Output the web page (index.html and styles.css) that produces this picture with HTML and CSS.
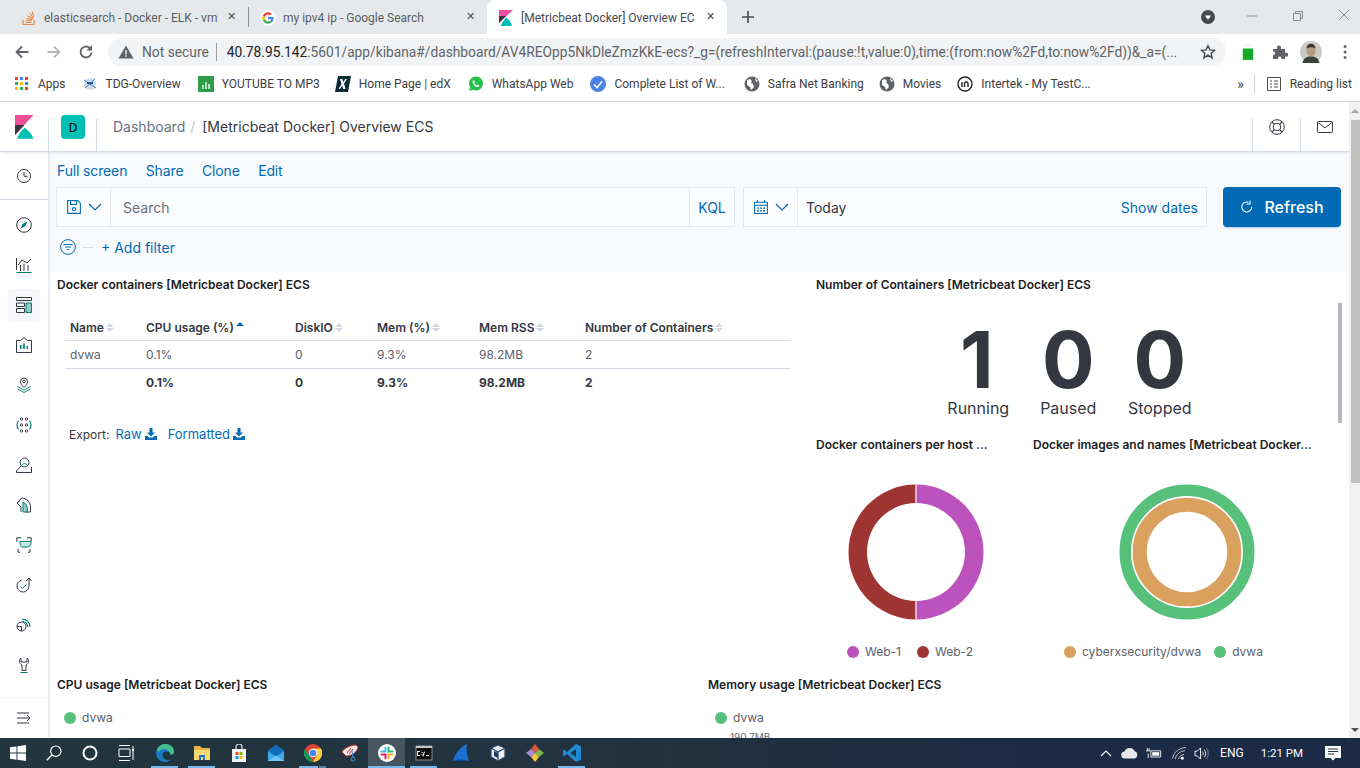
FILE: index.html
```html
<!DOCTYPE html>
<html lang="en">
<head>
<meta charset="utf-8">
<title>[Metricbeat Docker] Overview ECS</title>
<link rel="stylesheet" href="styles.css">
</head>
<body>
<div class="tabstrip">
  <div class="tab tab-first">
    <svg class="fav" viewBox="0 0 16 16"><path d="M2 10v4.500h11V10" fill="none" stroke="#d98b52" stroke-width="1.200"/><path d="M4.500 12.500h6M4.700 10.500l6 .5M5.500 8.500l5.700 1.400M7 6l5 3M9 3.500l3.400 4.500M11.200 1.500l1.600 5" stroke="#e08a3c" stroke-width="1.100" fill="none"/></svg>
    <span class="tab-title">elasticsearch - Docker - ELK - vm</span>
    <span class="tab-x">✕</span>
  </div>
  <div class="tab-sep"></div>
  <div class="tab tab-second">
    <svg class="fav" viewBox="0 0 16 16"><circle cx="8" cy="8" r="8" fill="#fff"/><path d="M13.600 8.100c0-.4 0-.8-.1-1.200H8v2.300h3.200c-.2.800-.6 1.400-1.200 1.800l1.800 1.400c1.100-1 1.800-2.500 1.800-4.300z" fill="#4285f4"/><path d="M8 13.700c1.500 0 2.800-.5 3.800-1.400L10 10.900c-.5.300-1.200.5-2 .5-1.500 0-2.800-1-3.200-2.400L2.900 10.500c.9 1.900 2.900 3.200 5.100 3.200z" fill="#34a853"/><path d="M4.800 9c-.2-.7-.2-1.400 0-2L2.900 5.500c-.8 1.600-.8 3.400 0 5z" fill="#fbbc05"/><path d="M8 4.600c.8 0 1.600.3 2.200.9l1.600-1.600C10.800 2.900 9.500 2.300 8 2.300c-2.200 0-4.200 1.300-5.100 3.200L4.800 7C5.200 5.600 6.500 4.600 8 4.600z" fill="#ea4335"/></svg>
    <span class="tab-title">my ipv4 ip - Google Search</span>
    <span class="tab-x">✕</span>
  </div>
  <div class="tab tab-active">
    <svg class="fav" viewBox="0 0 16 16"><path d="M1 0h14L1 13z" fill="#f04e98"/><path d="M1 6h7L1 13z" fill="#343741"/><path d="M2.500 16C4 12.500 6 9.500 8.300 7.500c2.900 2 4.900 5 5.700 8.500z" fill="#00bfb3"/></svg>
    <span class="tab-title">[Metricbeat Docker] Overview EC</span>
    <span class="tab-x">✕</span>
  </div>
  <svg class="newtab" viewBox="0 0 14 14"><path d="M7 1v12M1 7h12" stroke="#45494e" stroke-width="1.600"/></svg>
  <div class="winctl">
    <svg class="profile-drop" viewBox="0 0 14 14"><circle cx="7" cy="7" r="7" fill="#45494e"/><path d="M3.800 5.500h6.400L7 9.800z" fill="#fff"/></svg>
    <svg class="wbtn" viewBox="0 0 12 12"><path d="M1 6h10" stroke="#8a8d91"/></svg>
    <svg class="wbtn" viewBox="0 0 12 12"><path d="M1.500 3.500h7v7h-7zM3.500 3.500v-2h7v7h-2" fill="none" stroke="#8a8d91"/></svg>
    <svg class="wbtn" viewBox="0 0 12 12"><path d="M1 1l10 10M11 1L1 11" stroke="#8a8d91"/></svg>
  </div>
</div>

<div class="toolbar">
  <svg class="navbtn" viewBox="0 0 16 16"><path d="M14.500 8h-12M8 2.500L2.500 8 8 13.500" fill="none" stroke="#5f6368" stroke-width="1.800"/></svg>
  <svg class="navbtn" viewBox="0 0 16 16"><path d="M1.500 8h12M8 2.500L13.500 8 8 13.500" fill="none" stroke="#b6b8bb" stroke-width="1.800"/></svg>
  <svg class="navbtn" viewBox="0 0 16 16"><path d="M13.500 8.500A5.500 5.500 0 1 1 11.800 4" fill="none" stroke="#5f6368" stroke-width="1.800"/><path d="M14 1v5.500H8.500z" fill="#5f6368"/></svg>
  <div class="omnibox">
    <svg class="warn" viewBox="0 0 16 16"><path d="M8 1.500L15.500 14.500H.5z" fill="#5f6368"/><path d="M7.300 6h1.400v4.500H7.300zM7.300 11.300h1.400v1.500H7.300z" fill="#f1f3f4"/></svg>
    <span class="notsecure">Not secure</span>
    <span class="omni-sep"></span>
    <span class="url"><b>40.78.95.142</b>:5601/app/kibana#/dashboard/AV4REOpp5NkDleZmzKkE-ecs?_g=(refreshInterval:(pause:!t,value:0),time:(from:now%2Fd,to:now%2Fd))&amp;_a=(...</span>
    <svg class="star" viewBox="0 0 16 16"><path d="M8 1.700l1.900 4.200 4.600.5-3.400 3.100 1 4.500L8 11.200l-4.100 2.800 1-4.500L1.500 6.400l4.600-.5z" fill="none" stroke="#45494e" stroke-width="1.400"/></svg>
  </div>
  <svg class="ext-bag" viewBox="0 0 16 18"><path d="M5 3.500c0-4 6-4 6 0" fill="none" stroke="#c9e8cf"/><path d="M2 5h12v13H2z" fill="#16a826"/></svg>
  <svg class="ext-puzzle" viewBox="0 0 16 16"><path d="M1 5h4V3.500a2 2 0 0 1 4 0V5h4v3.800h1.200a2 2 0 0 1 0 4H13V15H9.500v-1a1.800 1.800 0 0 0-3.500 0v1H1v-4h1a2 2 0 0 0 0-3.500H1z" fill="#5f6368"/></svg>
  <svg class="avatar" viewBox="0 0 22 22"><circle cx="11" cy="11" r="11" fill="#c9cbc4"/><path d="M2.500 22c1-5 4-6.500 8.500-6.500s7.500 1.500 8.500 6.500z" fill="#3a4336"/><ellipse cx="11" cy="9.500" rx="4.500" ry="6" fill="#b79a80"/><path d="M6.500 8c0-7 9-7 9 0-1-2.500-8-2.500-9 0z" fill="#3e3128"/></svg>
  <svg class="menu-dots" viewBox="0 0 4 16"><circle cx="2" cy="2.500" r="1.500" fill="#5f6368"/><circle cx="2" cy="8" r="1.500" fill="#5f6368"/><circle cx="2" cy="13.500" r="1.500" fill="#5f6368"/></svg>
</div>

<div class="bookmarks">
  <span class="bm bm-apps">
    <svg class="bmi" viewBox="0 0 14 14"><g><rect x="0" y="0" width="3" height="3" fill="#ea4335"/><rect x="5" y="0" width="3" height="3" fill="#4285f4"/><rect x="10" y="0" width="3" height="3" fill="#ea4335"/><rect x="0" y="5" width="3" height="3" fill="#34a853"/><rect x="5" y="5" width="3" height="3" fill="#fbbc05"/><rect x="10" y="5" width="3" height="3" fill="#4285f4"/><rect x="0" y="10" width="3" height="3" fill="#fbbc05"/><rect x="5" y="10" width="3" height="3" fill="#34a853"/><rect x="10" y="10" width="3" height="3" fill="#ea4335"/></g></svg>Apps</span>
  <span class="bm bm-tdg">
    <svg class="bmi" viewBox="0 0 16 16"><circle cx="8" cy="8" r="6" fill="#cfdff0"/><path d="M2 4l12 8M3 12l10-9" stroke="#4a78a8"/><path d="M5 6h6v2H5z" fill="#1e5a96"/></svg>TDG-Overview</span>
  <span class="bm bm-yt">
    <svg class="bmi" viewBox="0 0 16 16"><rect width="16" height="16" fill="#2e9d4a"/><path d="M4 9h2v4H4zM7 6h2v7H7zM10 8h2v5h-2z" fill="#b7dfc2"/></svg>YOUTUBE TO MP3</span>
  <span class="bm bm-edx">
    <svg class="bmi" viewBox="0 0 16 16"><path d="M3 0h13l-3 16H0z" fill="#0a2a38"/><path d="M5 3h2.300l1 3 2-3H12L9 7.500l1.500 5.500H8.200L7.300 9.500 5 13H3.500l3-5z" fill="#fff"/></svg>Home Page | edX</span>
  <span class="bm bm-wa">
    <svg class="bmi" viewBox="0 0 16 16"><circle cx="8" cy="7.500" r="7" fill="#25c04a"/><path d="M1 15l1.500-4 3 2.500z" fill="#25c04a"/><path d="M5 4.500c-1 1.500 0 3.500 1.500 5s3 2 4.300 1.300l.5-1.300-2-1-.8.800c-1-.3-2-1.300-2.300-2.300l.8-.8-1-2z" fill="#fff"/></svg>WhatsApp Web</span>
  <span class="bm bm-check">
    <svg class="bmi" viewBox="0 0 16 16"><circle cx="8" cy="8" r="8" fill="#4a83e8"/><path d="M4 8.500l3 3 5-6" fill="none" stroke="#fff" stroke-width="1.600"/></svg>Complete List of W...</span>
  <span class="bm bm-safra">
    <svg class="bmi" viewBox="0 0 16 16"><circle cx="8" cy="8" r="7.500" fill="#5f6368"/><path d="M3 4l3-1 2 2-1 2 2 1 1 3-3 3-1-3-3-2zM11 2l3 3-2 1z" fill="#fff"/></svg>Safra Net Banking</span>
  <span class="bm bm-movies">
    <svg class="bmi" viewBox="0 0 16 16"><circle cx="8" cy="8" r="7.500" fill="#5f6368"/><path d="M3 4l3-1 2 2-1 2 2 1 1 3-3 3-1-3-3-2zM11 2l3 3-2 1z" fill="#fff"/></svg>Movies</span>
  <span class="bm bm-intertek">
    <svg class="bmi" viewBox="0 0 16 16"><circle cx="8" cy="8" r="7" fill="#fff" stroke="#222" stroke-width="1.400"/><path d="M5 6v5M7.500 11V7.500c0-2 3.500-2 3.500 0V11" fill="none" stroke="#222" stroke-width="1.400"/></svg>Intertek - My TestC...</span>
  <span class="bm-more">»</span>
  <span class="bm-sep"></span>
  <span class="bm bm-reading">
    <svg class="bmi" viewBox="0 0 14 14"><path d="M.5.500h13v13H.5zM3 4h2M3 7h2M3 10h2M7 4h4M7 7h4M7 10h4" fill="none" stroke="#45494e"/></svg>Reading list</span>
</div>

<div class="app">
  <div class="app-main">
    <header class="kbn-header">
      <div class="logo-cell">
        <svg class="kbn-logo" viewBox="0 0 19 24"><path d="M0 0h18.500L0 20z" fill="#f04e98"/><path d="M0 10h9.500L0 20z" fill="#343741"/><path d="M2 23.800C3.500 19.500 6 15.500 9.700 12.800c4 2.700 7.200 6.300 8.800 11z" fill="#00bfb3"/></svg>
      </div>
      <span class="hdr-div"></span>
      <div class="badge-cell"><span class="space-badge">D</span></div>
      <span class="hdr-div"></span>
      <nav class="crumbs"><span class="crumb">Dashboard</span><span class="crumb-sep">/</span><span class="crumb-cur">[Metricbeat Docker] Overview ECS</span></nav>
      <span class="hdr-div"></span>
      <div class="hdr-btn">
        <svg class="i16" viewBox="0 0 16 16"><circle cx="8" cy="8" r="7.300" fill="none" stroke="#343741"/><circle cx="8" cy="8" r="3.800" fill="none" stroke="#343741"/><path d="M3 2.800l2.300 2.500M13 2.800l-2.300 2.500M3 13.200l2.300-2.500M13 13.200l-2.300-2.500" stroke="#343741" stroke-width="1.200"/></svg>
      </div>
      <span class="hdr-div"></span>
      <div class="hdr-btn">
        <svg class="i16" viewBox="0 0 16 16"><rect x=".5" y="2.500" width="15" height="11" rx="1.200" fill="none" stroke="#343741"/><path d="M1 3.500l7 5.500 7-5.500" fill="none" stroke="#343741"/></svg>
      </div>
    </header>
    <div class="kbn-body">
      <aside class="sidenav">
        <div class="side-recent">
          <svg class="i16" viewBox="0 0 16 16"><circle cx="8" cy="8" r="6.500" fill="none" stroke="#343741"/><path d="M8 4v4.300h3.500" fill="none" stroke="#343741"/></svg>
        </div>
        <div class="side-list">
          <div class="side-item"><svg class="i16" viewBox="0 0 16 16"><circle cx="8" cy="8" r="7.300" fill="none" stroke="#343741"/><path d="M11.500 4.500L9.300 9.300 4.500 11.500l2.200-4.800z" fill="#017d73"/></svg></div>
          <div class="side-item"><svg class="i16" viewBox="0 0 16 16"><path d="M.5 15.500h15" stroke="#017d73"/><path d="M.5 13V1M2 8l4-5 5 3 4-4" fill="none" stroke="#343741"/><path d="M4.500 14V8M8 14V6.500M12 14V8" stroke="#343741"/></svg></div>
          <div class="side-item side-active"><svg class="i16" viewBox="0 0 16 16"><path d="M.5.500h15v3H.5zM.5 6h8v3.500h-8zM.5 11.500h8v4h-8z" fill="none" stroke="#343741"/><path d="M10 6h5.500v9.500H10z" fill="#8ecdc7" stroke="#017d73"/></svg></div>
          <div class="side-item"><svg class="i16" viewBox="0 0 16 16"><path d="M.5 3.500h4L8 .5l3.500 3h4v12H.5z" fill="none" stroke="#343741"/><path d="M4 8h1.500v4H4zM7.200 6.500h1.600V12H7.200zM10.500 9H12v3h-1.500z" fill="#017d73"/></svg></div>
          <div class="side-item"><svg class="i16" viewBox="0 0 16 16"><path d="M8 10.500C6 8.500 4.500 7 4.500 4.500a3.500 3.500 0 0 1 7 0c0 2.500-1.500 4-3.500 6z" fill="none" stroke="#343741"/><circle cx="8" cy="4.500" r="1.300" fill="none" stroke="#343741"/><path d="M1.500 9.500L8 13l6.500-3.500M1.500 12L8 15.500 14.500 12" fill="none" stroke="#017d73"/></svg></div>
          <div class="side-item"><svg class="i16" viewBox="0 0 16 16"><g fill="none" stroke="#343741"><circle cx="5.500" cy="2" r="1.200"/><circle cx="10.500" cy="2" r="1.200"/><circle cx="5.500" cy="8" r="1.200"/><circle cx="10.500" cy="8" r="1.200"/><circle cx="5.500" cy="14" r="1.200"/><circle cx="10.500" cy="14" r="1.200"/></g><path d="M2.500 3.500C.5 6 .5 10 2.500 12.500M13.500 3.500c2 2.500 2 6.500 0 9" fill="none" stroke="#017d73" stroke-width="1.200"/></svg></div>
          <div class="side-item"><svg class="i16" viewBox="0 0 16 16"><circle cx="8.500" cy="5.500" r="4.500" fill="none" stroke="#343741"/><path d="M5.500 8.500c1.500-2.500 4.500-2.500 6 0" fill="none" stroke="#017d73"/><path d="M5 9L.5 14v1.500h15V10" fill="none" stroke="#343741"/></svg></div>
          <div class="side-item"><svg class="i16" viewBox="0 0 16 16"><path d="M1 6L5.500 1c5 0 9 4 9 9v5h-5" fill="none" stroke="#343741"/><path d="M4 3.500L1 6l4 4v5" fill="none" stroke="#343741"/><path d="M7 5c2.500 1 4.500 4 4.500 8v2H7z" fill="#8ecdc7" stroke="#017d73"/></svg></div>
          <div class="side-item"><svg class="i16" viewBox="0 0 16 16"><path d="M5 .8H.8v3.700M11 .8h4.200v3.700M4 15.200h-2V12M12 15.200h2V12" fill="none" stroke="#343741"/><path d="M4 4.500h11v2c0 2-2 3.500-4 3.500H6C5 10 4 8 4 6.500z" fill="#c6e7e3" stroke="#017d73"/></svg></div>
          <div class="side-item"><svg class="i16" viewBox="0 0 16 16"><path d="M13 1l-2.800 3M13 1l2.500 3M13 1v8a6 6 0 1 1-7.500-5.800" fill="none" stroke="#343741"/><path d="M4.500 9.300l2 2 3.500-3.500" fill="none" stroke="#017d73"/></svg></div>
          <div class="side-item"><svg class="i16" viewBox="0 0 16 16"><path d="M1 9.500a4.500 4.500 0 1 1 4.500 4.500v-4.500zM5.500 14A4.500 4.500 0 0 1 1 9.500" fill="none" stroke="#343741"/><path d="M6 2c4.500 0 8 3.500 8 8M6.500 4.500c3 0 5.200 2.500 5.200 5.500" fill="none" stroke="#017d73" stroke-width="1.100"/></svg></div>
          <div class="side-item"><svg class="i16" viewBox="0 0 16 16"><path d="M5 1C2.500 2.500 3 6.500 6 8v5.500h4V8c3-1.500 3.500-5.500 1-7v4H5z" fill="none" stroke="#343741"/><path d="M4.500 15.500h7" stroke="#017d73"/></svg></div>
          <div class="side-item"><svg class="i16" viewBox="0 0 16 16"><circle cx="5" cy="2" r="1.500" fill="none" stroke="#343741"/><circle cx="11" cy="2" r="1.500" fill="none" stroke="#343741"/></svg></div>
        </div>
        <div class="side-foot">
          <svg class="i16" viewBox="0 0 16 16"><path d="M1 3h12M1 8h13M1 13h12M11 5l3 3-3 3" fill="none" stroke="#343741"/></svg>
        </div>
      </aside>
      <main class="content">
        <section class="querybar">
          <div class="toplinks"><a>Full screen</a><a>Share</a><a>Clone</a><a>Edit</a></div>
          <div class="searchrow">
            <div class="field field-search">
              <span class="field-btn btn-save">
                <svg class="i14" viewBox="0 0 16 16"><path d="M.7.700h11.600l3 3v11.600H.7zM4 .7v4.500h7V.7" fill="none" stroke="#006bb4" stroke-width="1.200"/><circle cx="8" cy="10.500" r="1.800" fill="none" stroke="#006bb4" stroke-width="1.200"/></svg>
                <svg class="chev" viewBox="0 0 14 8"><path d="M1 1l6 6 6-6" fill="none" stroke="#006bb4" stroke-width="1.200"/></svg>
              </span>
              <span class="field-text placeholder">Search</span>
              <span class="field-end kql">KQL</span>
            </div>
            <div class="field field-date">
              <span class="field-btn btn-cal">
                <svg class="i14" viewBox="0 0 16 16"><path d="M.7 2.500h14.600v13H.7z" fill="none" stroke="#006bb4" stroke-width="1.200"/><path d="M.7 6h14.600" stroke="#006bb4" stroke-width="1.200"/><path d="M4 0v3.500M12 0v3.500" stroke="#006bb4" stroke-width="1.200"/><path d="M3.500 8.500h2v1.500h-2zM7 8.500h2v1.500H7zM10.500 8.500h2v1.500h-2zM3.500 11.500h2V13h-2zM7 11.500h2V13H7zM10.500 11.500h2V13h-2z" fill="#006bb4"/></svg>
                <svg class="chev" viewBox="0 0 14 8"><path d="M1 1l6 6 6-6" fill="none" stroke="#006bb4" stroke-width="1.200"/></svg>
              </span>
              <span class="field-text today">Today</span>
              <a class="showdates">Show dates</a>
            </div>
            <button class="refresh">
              <svg class="i14" viewBox="0 0 16 16"><path d="M13.500 8A5.700 5.700 0 1 1 9.500 2.500" fill="none" stroke="#fff" stroke-width="1.200"/><path d="M11.500 .5v4h-4" fill="none" stroke="#fff" stroke-width="1.200"/></svg>
              <span>Refresh</span>
            </button>
          </div>
          <div class="filterrow">
            <svg class="filter-ico" viewBox="0 0 16 16"><circle cx="8" cy="8" r="7.400" fill="none" stroke="#006bb4"/><path d="M3.500 5.500h9M5 8h6M6.700 10.500h2.600" stroke="#006bb4" stroke-width="1.100"/></svg>
            <span class="filter-dash"></span>
            <a class="addfilter">+ Add filter</a>
          </div>
        </section>
        <section class="panels">
          <div class="panel panel-table">
            <h3 class="ptitle">Docker containers [Metricbeat Docker] ECS</h3>
            <table class="dtable">
              <colgroup><col class="c1"><col class="c2"><col class="c3"><col class="c4"><col class="c5"><col class="c6"></colgroup>
              <thead><tr>
                <th>Name<span class="sort"></span></th>
                <th>CPU usage (%)<span class="sort sort-up"></span></th>
                <th>DiskIO<span class="sort"></span></th>
                <th>Mem (%)<span class="sort"></span></th>
                <th>Mem RSS<span class="sort"></span></th>
                <th>Number of Containers<span class="sort"></span></th>
              </tr></thead>
              <tbody><tr><td>dvwa</td><td>0.1%</td><td>0</td><td>9.3%</td><td>98.2MB</td><td>2</td></tr></tbody>
              <tfoot><tr><td></td><td>0.1%</td><td>0</td><td>9.3%</td><td>98.2MB</td><td>2</td></tr></tfoot>
            </table>
            <div class="export">
              <span class="export-l">Export:</span>
              <a>Raw <svg class="dl" viewBox="0 0 12 12"><path d="M4.500 0h3v4.500H10L6 8.500 2 4.500h2.500zM0 8h2.500l1.500 1.500h4L9.500 8H12v4H0z" fill="#006bb4"/></svg></a>
              <a>Formatted <svg class="dl" viewBox="0 0 12 12"><path d="M4.500 0h3v4.500H10L6 8.500 2 4.500h2.500zM0 8h2.500l1.500 1.500h4L9.500 8H12v4H0z" fill="#006bb4"/></svg></a>
            </div>
          </div>
          <div class="panel-right">
            <div class="panel panel-metric">
              <h3 class="ptitle">Number of Containers [Metricbeat Docker] ECS</h3>
              <div class="metrics">
                <div class="metric metric-run"><span class="mval">1</span><span class="mlabel">Running</span></div>
                <div class="metric"><span class="mval">0</span><span class="mlabel">Paused</span></div>
                <div class="metric"><span class="mval">0</span><span class="mlabel">Stopped</span></div>
              </div>
              <span class="inner-thumb"></span>
            </div>
            <div class="donuts">
              <div class="panel panel-donut">
                <h3 class="ptitle ptitle-cut">Docker containers per host ...</h3>
                <svg class="donut" viewBox="0 0 136 136">
                  <path d="M68 .5a67.500 67.500 0 0 1 0 135v-18.500a49 49 0 0 0 0-98z" fill="#bc52bc"/>
                  <path d="M68 .5a67.500 67.500 0 0 0 0 135v-18.500a49 49 0 0 1 0-98z" fill="#9e3533"/>
                  <path d="M68 .5v18.500M68 117v18.500" stroke="#fff" stroke-width="1.200"/>
                </svg>
                <div class="legend">
                  <span class="lg"><i class="dot dot-web1"></i>Web-1</span>
                  <span class="lg"><i class="dot dot-web2"></i>Web-2</span>
                </div>
              </div>
              <div class="panel panel-donut2">
                <h3 class="ptitle ptitle-cut">Docker images and names [Metricbeat Docker...</h3>
                <svg class="donut" viewBox="0 0 136 136">
                  <circle cx="68" cy="68" r="61.750" fill="none" stroke="#57c17b" stroke-width="11.500"/>
                  <circle cx="68" cy="68" r="47.300" fill="none" stroke="#daa05d" stroke-width="14"/>
                </svg>
                <div class="legend">
                  <span class="lg"><i class="dot dot-cyber"></i>cyberxsecurity/dvwa</span>
                  <span class="lg"><i class="dot dot-dvwa"></i>dvwa</span>
                </div>
              </div>
            </div>
          </div>
          <div class="panel panel-cpu">
            <h3 class="ptitle">CPU usage [Metricbeat Docker] ECS</h3>
            <div class="chart-legend"><i class="dot dot-dvwa"></i>dvwa</div>
          </div>
          <div class="panel panel-mem">
            <h3 class="ptitle">Memory usage [Metricbeat Docker] ECS</h3>
            <div class="chart-legend"><i class="dot dot-dvwa"></i>dvwa</div>
            <div class="tick">190.7MB</div>
          </div>
        </section>
      </main>
    </div>
  </div>
  <div class="scrollbar"><span class="sb-arrow"></span><span class="sb-thumb"></span><span class="sb-arrow-down"></span></div>
</div>

<footer class="taskbar">
  <div class="tb tb-sys"><svg class="ti" viewBox="0 0 16 16"><path d="M0 2.300l6.500-.9v6.200H0zM7.400 1.300L16 0v7.600H7.400zM0 8.500h6.500v6.200L0 13.800zM7.400 8.500H16V16l-8.600-1.200z" fill="#fff"/></svg></div>
  <div class="tb tb-sys"><svg class="ti" viewBox="0 0 16 16"><circle cx="9.800" cy="6.200" r="5.200" fill="none" stroke="#fff" stroke-width="1.200"/><path d="M6 10L.8 15.300" stroke="#fff" stroke-width="1.400"/></svg></div>
  <div class="tb tb-sys"><svg class="ti" viewBox="0 0 16 16"><circle cx="8" cy="8" r="6.500" fill="none" stroke="#fff" stroke-width="2"/></svg></div>
  <div class="tb tb-sys"><svg class="ti" viewBox="0 0 16 16"><path d="M1 .5h11M1 15.500h11M1 4h11v7.500H1zM15 1v14" fill="none" stroke="#fff"/><path d="M14 4h2v2h-2z" fill="#fff"/></svg></div>
  <div class="tb tb-app tb-first tb-open"><svg class="ti ti-lg" viewBox="0 0 18 18"><path d="M9 0a9 9 0 0 0-9 9c0 5 4 9 9 9 2.500 0 4.500-.8 6-2.300-4.500 1.500-8.500-1-8.500-4.700 0-2 1.500-3.500 3.500-3.500 3 0 4.500 2 4.500 3.500 2.500 0 4-1.500 4-3A9 9 0 0 0 9 0z" fill="#1c79c4"/><path d="M1 5.500C2.500 2 6 0 9 0c5 0 9 3.500 9 7.500 0 1.500-1.500 3-3.500 3C14 7 11 4.500 7.500 5 4.500 5.500 3 7 2.500 8z" fill="#43c28e"/></svg></div>
  <div class="tb tb-app tb-open"><svg class="ti ti-lg" viewBox="0 0 18 18"><path d="M1 2h6l2 2h8v12H1z" fill="#e8b33f"/><path d="M1 6h16v10H1z" fill="#f8d775"/><path d="M6 11h6v5h-2v-3H8v3H6z" fill="#1f76c2"/></svg></div>
  <div class="tb tb-app"><svg class="ti ti-lg" viewBox="0 0 18 18"><path d="M2 5h14v13H2z" fill="#f3f3f3"/><path d="M6 5V3a3 3 0 0 1 6 0v2" fill="none" stroke="#e5e5e5" stroke-width="1.200"/><rect x="5.500" y="8" width="3" height="3" fill="#f25022"/><rect x="9.500" y="8" width="3" height="3" fill="#7fba00"/><rect x="5.500" y="12" width="3" height="3" fill="#00a4ef"/><rect x="9.500" y="12" width="3" height="3" fill="#ffb900"/></svg></div>
  <div class="tb tb-app"><svg class="ti ti-lg" viewBox="0 0 18 18"><path d="M1 7l8-6 8 6v10H1z" fill="#3da8e8"/><path d="M1 7l8 5.500L17 7 9 1z" fill="#0f6cbd"/><path d="M1 17l8-5.500 8 5.500z" fill="#74c4f2"/></svg></div>
  <div class="tb tb-app tb-open-split"><svg class="ti ti-lg" viewBox="0 0 18 18"><circle cx="9" cy="9" r="9" fill="#db4437"/><path d="M9 18a9 9 0 0 1-7.800-13.500L5.500 12l3.500 6z" fill="#0f9d58"/><path d="M9 4.500h8a9 9 0 0 1-8 13.500l4-7z" fill="#ffcd40"/><circle cx="9" cy="9" r="4.200" fill="#fff"/><circle cx="9" cy="9" r="3.300" fill="#4285f4"/></svg></div>
  <div class="tb tb-app"><svg class="ti ti-lg" viewBox="0 0 18 18"><path d="M1 8c1-3 8-7 14-7l2 2c-1 5-6 9-12 9z" fill="#f3e8e8" stroke="#c8353a"/><path d="M6 9l4-5M8 10l4-5" stroke="#c8353a"/><circle cx="12" cy="15" r="2" fill="none" stroke="#3a8ed8"/><path d="M11 6l1 8" stroke="#3a8ed8"/></svg></div>
  <div class="tb tb-app tb-active"><svg class="ti ti-lg" viewBox="0 0 18 18"><circle cx="9" cy="9" r="9" fill="#fff"/><path d="M7.500 3.500v4h-4" fill="none" stroke="#36c5f0" stroke-width="2" stroke-linecap="round"/><path d="M14.500 7.500h-4v-4" fill="none" stroke="#2eb67d" stroke-width="2" stroke-linecap="round"/><path d="M10.500 14.500v-4h4" fill="none" stroke="#ecb22e" stroke-width="2" stroke-linecap="round"/><path d="M3.500 10.500h4v4" fill="none" stroke="#e01e5a" stroke-width="2" stroke-linecap="round"/></svg></div>
  <div class="tb tb-app tb-open"><svg class="ti ti-lg" viewBox="0 0 18 18"><rect x="1" y="2" width="16" height="14" fill="#0c0c0c" stroke="#8d8d8d"/><path d="M1 2h16v2H1z" fill="#c7c7c7"/><path d="M3 7h2v1H3v3h2v1H2V7zM6.500 8h1v1h-1zM6.500 10.500h1v1h-1zM9 7.500l1 .2-1.500 4.500-1-.2zM11 11h3v1h-3z" fill="#fff"/></svg></div>
  <div class="tb tb-app"><svg class="ti ti-lg" viewBox="0 0 18 18"><path d="M1 17C3 10 8 3 15 0c-1 5 0 12 2 17z" fill="#1f6fd1"/><path d="M1 17c4-2 11-2 16 0z" fill="#0d49a0"/></svg></div>
  <div class="tb tb-app"><svg class="ti ti-lg" viewBox="0 0 18 18"><path d="M9 1l7 3v9l-7 4-7-4V4z" fill="#e8edf3" stroke="#26446b" stroke-width="1.200"/><path d="M2 4l7 4 7-4M9 8v9" fill="none" stroke="#26446b" stroke-width="1.200"/><path d="M5 7l4 2v5l-4-2z" fill="#1b3a66"/></svg></div>
  <div class="tb tb-app"><svg class="ti ti-lg" viewBox="0 0 18 18"><path d="M9 0l4 5-4 4-4-4z" fill="#e0533d"/><path d="M13 5l5 4-5 4-4-4z" fill="#7ab648"/><path d="M5 5l4 4-4 4-5-4z" fill="#a88bd9"/><path d="M9 9l4 4-4 5-4-5z" fill="#f3c744"/></svg></div>
  <div class="tb tb-app tb-open"><svg class="ti ti-lg" viewBox="0 0 18 18"><path d="M13 0l5 2.500v13L13 18 4 10l-3 2.500-1-1V6.500l1-1L4 8z" fill="#1f8ad2"/><path d="M13 5L7.500 9l5.500 4z" fill="#22333f"/></svg></div>
  <div class="tray">
    <svg class="tr tr-caret" viewBox="0 0 12 8"><path d="M1 7l5-5 5 5" fill="none" stroke="#fff" stroke-width="1.100"/></svg>
    <svg class="tr tr-cloud" viewBox="0 0 18 12"><path d="M4 11.500a3.500 3.500 0 0 1-.5-7A5.500 5.500 0 0 1 13.500 4 4 4 0 0 1 14 11.500z" fill="#e8e8e8"/></svg>
    <svg class="tr tr-batt" viewBox="0 0 18 12"><path d="M0 3h5M1.500 0v3M3.500 0v3M2.500 6v5" stroke="#fff"/><path d="M5.500 3h11v7h-11z" fill="none" stroke="#fff"/><path d="M7 4.500h8v4H7z" fill="#fff"/></svg>
    <svg class="tr tr-wifi" viewBox="0 0 16 14"><path d="M.5 12.500C1.500 6 7 1 15 .5M3.500 13C4 8.500 8 4.500 14 4M7 13c.3-2.500 2.500-4.500 6-5" fill="none" stroke="#c8ccd0"/><circle cx="11" cy="12" r="1.600" fill="#fff"/></svg>
    <svg class="tr tr-vol" viewBox="0 0 16 14"><path d="M1 4.500h2.500L7 1v12L3.500 9.500H1z" fill="none" stroke="#fff"/><path d="M9 5c1 1 1 3 0 4M11 3c2 2 2 6 0 8" fill="none" stroke="#fff"/><path d="M13 1c3 3 3 9 0 12" fill="none" stroke="#7d8a96"/></svg>
    <span class="tray-text eng">ENG</span>
    <span class="tray-text clock">1:21 PM</span>
    <svg class="tr tr-note" viewBox="0 0 16 15"><path d="M0 0h16v12h-5.500L8 14.500 5.500 12H0z" fill="#fff"/><path d="M3 3h10M3 5.500h10M3 8h6" stroke="#22333f"/></svg>
  </div>
</footer>
</body>
</html>
```
FILE: styles.css
```css
* { box-sizing: border-box; }
html, body { margin: 0; height: 768px; width: 1360px; overflow: hidden; }
body { display: flex; flex-direction: column; font-family: Inter, "Liberation Sans", sans-serif; background: #fff; }
svg { display: block; flex: none; }

/* browser chrome */
.tabstrip { height: 34px; background: #e6e9ec; display: flex; align-items: center; font: 12px Roboto, sans-serif; color: #5a5d61; flex: none; }
.tab { height: 34px; display: flex; align-items: center; position: relative; padding-top: 1px; }
.tab-first { width: 248px; padding-left: 21px; }
.tab-second { width: 238px; padding-left: 11px; }
.tab-active { width: 240px; padding-left: 11px; background: #fff; border-radius: 8px 8px 0 0; color: #45494e; }
.tab-sep { width: 1px; height: 20px; background: #8d9094; flex: none; }
.fav { width: 16px; height: 16px; margin-right: 7px; }
.tab-title { overflow: hidden; white-space: nowrap; width: 176px; font-size: 12px; }
.tab-second .tab-title { width: 186px; }
.tab-x { position: absolute; right: 12px; top: 10px; font-size: 11px; color: #45494e; }
.newtab { width: 14px; height: 14px; margin-left: 14px; }
.winctl { margin-left: auto; display: flex; align-items: center; }
.profile-drop { width: 14px; height: 14px; margin-right: 31px; }
.wbtn { width: 12px; height: 12px; margin-right: 34px; margin-top: -2px; }
.wbtn:last-child { margin-right: 10px; margin-top: -4px; }

.toolbar { height: 34px; background: #fff; display: flex; align-items: center; flex: none; padding: 2px 0 0 14px; }
.navbtn { width: 16px; height: 16px; margin-right: 16px; }
.omnibox { width: 1118px; height: 28px; margin-left: -2px; border-radius: 14px; background: #f1f3f4; display: flex; align-items: center; padding-left: 10px; font: 13.750px Roboto, sans-serif; color: #5f6368; white-space: nowrap; flex: none; }
.warn { width: 16px; height: 16px; margin-right: 8px; }
.notsecure { font-size: 13.800px; color: #5f6368; }
.omni-sep { width: 1px; height: 18px; background: #9aa0a6; margin: 0 10px 0 7px; }
.url { width: 960px; overflow: hidden; }
.url b { font-weight: 400; color: #202124; }
.star { width: 16px; height: 16px; margin-left: 13px; }
.ext-bag { width: 14px; height: 16px; margin-left: 15px; }
.ext-puzzle { width: 16px; height: 16px; margin-left: 17px; }
.avatar { width: 22px; height: 22px; margin-left: 12px; }
.menu-dots { width: 4px; height: 16px; margin-left: 21px; }

.bookmarks { height: 34px; background: #fff; display: flex; align-items: center; flex: none; font: 12px Roboto, sans-serif; color: #3c4043; white-space: nowrap; border-bottom: 1px solid #d3d6da; padding: 0 0 1px 15px; }
.bm { display: flex; align-items: center; }
.bmi { width: 16px; height: 16px; margin-right: 8px; }
.bm-apps .bmi { width: 14px; height: 14px; margin-right: 9px; }
.bm-tdg { margin-left: 16px; }
.bm-yt { margin-left: 17px; }
.bm-edx { margin-left: 15px; }
.bm-wa { margin-left: 17px; }
.bm-check { margin-left: 17px; }
.bm-safra { margin-left: 19px; }
.bm-movies { margin-left: 15px; }
.bm-intertek { margin-left: 16px; }
.bm-more { margin-left: auto; font-size: 14px; color: #45494e; }
.bm-sep { width: 1px; height: 20px; background: #d3d6da; margin: 0 12px 0 10px; }
.bm-reading { margin-right: 8px; }
.bm-reading .bmi { width: 14px; height: 14px; margin-right: 9px; }

/* app */
.app { flex: 1; display: flex; min-height: 0; background: #fff; }
.app-main { flex: 1; display: flex; flex-direction: column; min-width: 0; }
.scrollbar { width: 11px; background: #f1f1f1; display: flex; flex-direction: column; align-items: flex-end; flex: none; }
.sb-arrow { width: 0; height: 0; border: 4px solid transparent; border-top: 0; border-bottom: 4px solid #a3a3a3; margin: 7px 1px 7px 0; }
.sb-thumb { width: 9px; height: 363px; background: #c1c1c1; flex: none; }
.sb-arrow-down { width: 0; height: 0; border: 4px solid transparent; border-bottom: 0; border-top: 4px solid #505050; margin: auto 1px 6px 0; }

.kbn-header { height: 50px; display: flex; align-items: flex-end; background: #fff; border-bottom: 1px solid #d3dae6; box-shadow: 0 2px 2px -1px rgba(152,162,179,.3); position: relative; z-index: 2; flex: none; padding-right: 1px; }
.logo-cell { width: 48px; height: 50px; display: flex; align-items: center; justify-content: center; align-self: stretch; padding-left: 1px; padding-bottom: 1px; }
.kbn-logo { width: 19px; height: 24px; }
.hdr-div { width: 1px; height: 32px; background: #d3dae6; flex: none; }
.badge-cell { width: 47px; align-self: stretch; display: flex; align-items: center; justify-content: center; padding-top: 1px; padding-left: 1px; }
.space-badge { width: 24px; height: 24px; border-radius: 4px; background: #00bfb3; color: #000; font-size: 12px; display: flex; align-items: center; justify-content: center; }
.crumbs { flex: 1; align-self: stretch; display: flex; align-items: center; padding-left: 16px; font-size: 14px; white-space: nowrap; }
.crumb { color: #69707d; }
.crumb-sep { color: #c2c7cf; margin: 0 7px 0 5px; }
.crumb-cur { color: #343741; }
.hdr-btn { width: 47px; align-self: stretch; display: flex; align-items: flex-start; justify-content: center; padding-top: 17px; }
.i16 { width: 16px; height: 16px; }
.i14 { width: 14px; height: 14px; }

.kbn-body { flex: 1; display: flex; min-height: 0; }
.sidenav { width: 49px; flex: none; display: flex; flex-direction: column; background: #fff; border-right: 1px solid #e6e9f0; box-shadow: 1px 0 2px rgba(152,162,179,.2); position: relative; z-index: 1; }
.side-recent { height: 48px; display: flex; align-items: center; justify-content: center; border-bottom: 1px solid #d3dae6; flex: none; }
.side-list { flex: 1; min-height: 0; overflow: hidden; padding-top: 5px; }
.side-item { height: 40px; display: flex; align-items: center; justify-content: center; margin: 0 8px; border-radius: 4px; flex: none; }
.side-active { background: #f5f7fa; height: 32px; margin-top: 4px; margin-bottom: 4px; }
.side-foot { height: 41px; display: flex; align-items: center; justify-content: center; border-top: 1px solid #eef0f4; flex: none; }

.content { flex: 1; min-width: 0; overflow: hidden; display: flex; flex-direction: column; background: #fff; }
.querybar { height: 120px; background: #f9fafd; padding: 9px 8px 0 7px; flex: none; }
.toplinks { display: flex; gap: 18.500px; height: 20px; font-size: 14px; line-height: 20px; color: #006bb4; padding-left: 1px; margin-bottom: 6px; letter-spacing: -.01em; }
.searchrow { display: flex; height: 40px; }
.field { height: 40px; display: flex; align-items: center; background: #fbfcfd; border: 1px solid #e4e8ef; font-size: 14px; }
.field-search { width: 679px; }
.field-date { width: 464px; margin-left: 8px; }
.field-btn { width: 54px; height: 38px; display: flex; align-items: center; border-right: 1px solid #e4e8ef; padding-left: 10px; gap: 7px; flex: none; }
.chev { width: 14px; height: 8px; }
.field-text { flex: 1; padding-left: 12px; }
.today { padding-left: 8px; color: #343741; }
.placeholder { color: #69707d; }
.field-end { width: 45px; height: 38px; display: flex; align-items: center; justify-content: center; border-left: 1px solid #e4e8ef; }
.kql { color: #006bb4; }
.showdates { color: #006bb4; padding-right: 8px; }
.refresh { width: 118px; height: 40px; margin-left: 16px; background: #006bb4; border: 0; border-radius: 4px; color: #fff; font: 500 16px Inter, sans-serif; display: flex; align-items: center; justify-content: center; gap: 10px; box-shadow: 0 2px 2px -1px rgba(0,107,180,.3); }
.filterrow { display: flex; align-items: center; height: 20px; margin-top: 10px; padding-left: 4px; font-size: 14px; color: #006bb4; }
.filter-ico { width: 16px; height: 16px; }
.filter-dash { width: 10px; height: 1px; background: #d3dae6; margin: 0 8px 0 7px; }

.panels { flex: 1; min-height: 0; display: grid; grid-template-columns: 651px 108px 532px; grid-template-rows: 400px 1fr; background: #fff; }
.panel { position: relative; }
.ptitle { margin: 0; font-size: 12px; font-weight: 600; line-height: 16px; color: #1a1c21; padding-top: 5px; white-space: nowrap; }
.panel-table { grid-column: 1 / 3; padding-left: 8px; }
.panel-right { grid-column: 3; display: flex; flex-direction: column; padding-left: 8px; }
.panel-metric { height: 158px; }
.dtable { border-collapse: collapse; table-layout: fixed; width: 725px; margin: 19px 0 0 8px; font-size: 12px; color: #343741; }
.c1 { width: 76px; } .c2 { width: 149px; } .c3 { width: 82px; } .c4 { width: 102px; } .c5 { width: 106px; } .c6 { width: 210px; }
.dtable th { height: 28px; padding: 3px 0 0 5px; text-align: left; font-weight: 600; color: #343741; border-bottom: 1px solid #d3dae6; }
.dtable td { height: 28px; padding: 1px 0 0 5px; color: #5a606c; border-bottom: 1px solid #d3dae6; }
.dtable tfoot td { font-weight: 700; color: #343741; border-bottom: 0; }
.sort { display: inline-block; width: 8px; height: 10px; margin-left: 2px; vertical-align: -1px; position: relative; }
.sort::before { content: ""; position: absolute; left: 0; top: 0; border: 4px solid transparent; border-top: 0; border-bottom: 4px solid #d3dae6; }
.sort::after { content: ""; position: absolute; left: 0; top: 5px; border: 4px solid transparent; border-bottom: 0; border-top: 4px solid #d3dae6; }
.sort-up::before { border-bottom-color: #006bb4; top: -1px; }
.sort-up::after { display: none; }
.export { display: flex; align-items: center; margin: 30px 0 0 12px; font-size: 12px; color: #343741; height: 16px; }
.export-l { margin-right: 6px; }
.export a { color: #006bb4; display: flex; align-items: center; gap: 3px; margin-right: 11px; font-size: 13px; }
.dl { width: 12px; height: 12px; }

.metrics { display: flex; padding-left: 115px; margin-top: 29px; }
.metric { width: 91.500px; display: flex; flex-direction: column; align-items: center; }
.metric-run .mlabel { margin-left: 3px; }
.mval { font-size: 78px; line-height: 76px; font-weight: 700; color: #343741; height: 76px; }
.mlabel { font-size: 16px; line-height: 20px; color: #343741; }
.inner-thumb { position: absolute; right: -2px; top: 31px; width: 4px; height: 120px; background: #b5b7bf; }

.donuts { display: flex; }
.panel-donut { width: 217px; }
.panel-donut2 { width: 290px; }
.ptitle-cut { padding-top: 7px; }
.donut { width: 136px; height: 136px; margin-top: 31px; }
.panel-donut .donut { margin-left: 31.500px; }
.panel-donut2 .donut { margin-left: 85.500px; }
.legend { display: flex; font-size: 12px; color: #5a606c; margin-top: 24px; line-height: 16px; }
.panel-donut .legend { padding-left: 31px; gap: 16px; }
.panel-donut2 .legend { padding-left: 31px; gap: 13px; }
.lg { display: flex; align-items: center; gap: 6px; white-space: nowrap; }
.dot { display: inline-block; width: 12px; height: 12px; border-radius: 50%; flex: none; }
.dot-web1 { background: #bc52bc; }
.dot-web2 { background: #9e3533; }
.dot-cyber { background: #daa05d; }
.dot-dvwa { background: #57c17b; }

.panel-cpu { grid-column: 1; padding-left: 8px; width: 651px; }
.panel-mem { grid-column: 2 / 4; padding-left: 8px; }
.chart-legend { display: flex; align-items: center; gap: 6px; font-size: 12px; color: #5a606c; margin: 17px 0 0 7px; line-height: 16px; }
.tick { font-size: 10px; color: #69707d; margin: 5px 0 0 22px; }

/* taskbar */
.taskbar { height: 30px; flex: none; background: linear-gradient(90deg, #21363f 0, #22333f 600px, #1b2a45 1100px); display: flex; align-items: stretch; position: relative; color: #fff; }
.tb { width: 37px; display: flex; align-items: center; justify-content: center; position: relative; flex: none; }
.tb-sys { width: 36px; }
.tb-first { margin-left: 2px; }
.ti { width: 16px; height: 16px; }
.ti-lg { width: 18px; height: 18px; }
.tb-open::after { content: ""; position: absolute; left: 5px; right: 5px; bottom: 0; height: 2px; background: #76b9ed; }
.tb-open-split::after { content: ""; position: absolute; left: 5px; right: 5px; bottom: 0; height: 2px; background: linear-gradient(90deg, #76b9ed 0 19px, #22333f 19px 20px, #4f86b0 20px); }
.tb-active { background: #46555f; }
.tb-active::after { content: ""; position: absolute; left: 0; right: 0; bottom: 0; height: 2px; background: #76b9ed; }
.tray { margin-left: auto; display: flex; align-items: center; font: 12px Roboto, sans-serif; }
.tr-caret { width: 12px; height: 8px; margin-right: 9px; }
.tr-cloud { width: 18px; height: 12px; margin-right: 7px; }
.tr-batt { width: 16px; height: 11px; margin-right: 10px; }
.tr-wifi { width: 15px; height: 13px; margin-right: 7px; }
.tr-vol { width: 15px; height: 13px; margin-right: 11px; }
.tray-text { white-space: nowrap; color: #fff; }
.eng { font-size: 12px; }
.clock { font-size: 11.500px; margin-left: 17px; margin-right: 22px; }
.tr-note { width: 16px; height: 15px; margin-right: 19px; }
```
